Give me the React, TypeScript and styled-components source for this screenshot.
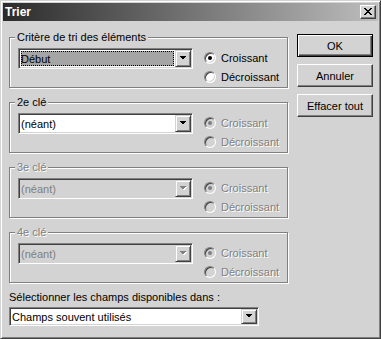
import styled, { createGlobalStyle } from "styled-components";

const face = "#d3d3d3";

const GlobalStyle = createGlobalStyle`
  html, body {
    margin: 0;
    padding: 0;
    background: ${face};
  }
  body {
    font-family: "Liberation Sans", Arial, sans-serif;
    font-size: 11px;
  }
`;

const Window = styled.div`
  width: 381px;
  height: 339px;
  box-sizing: border-box;
  background: ${face};
  border: 1px solid;
  border-color: ${face} #404040 #404040 ${face};
  box-shadow: inset 1px 1px #fff, inset -1px -1px #808080;
  padding: 2px;
  display: flex;
  flex-direction: column;
`;

const TitleBar = styled.div`
  height: 18px;
  flex: none;
  display: flex;
  align-items: center;
  justify-content: space-between;
  padding: 0 2px;
  background: linear-gradient(to right, #2b2b2b, #bdbdbd);
`;

const Title = styled.span`
  color: #fff;
  font-weight: bold;
  font-size: 12px;
  line-height: 18px;
`;

const CloseButton = styled.div`
  width: 16px;
  height: 14px;
  box-sizing: border-box;
  background: ${face};
  border: 1px solid;
  border-color: #fff #404040 #404040 #fff;
  box-shadow: inset -1px -1px #808080;
  display: flex;
  align-items: center;
  justify-content: center;
  padding: 0 1px 1px 0;
`;

const Body = styled.div`
  flex: 1;
  display: flex;
  flex-direction: column;
  padding: 13px 5px 0 6px;
`;

const TopRow = styled.div`
  display: flex;
  justify-content: space-between;
  align-items: flex-start;
`;

const KeysColumn = styled.div`
  display: flex;
  flex-direction: column;
  gap: 14px;
  padding-top: 3px;
`;

const GroupBox = styled.div`
  position: relative;
  width: 279px;
  height: 51px;
  box-sizing: border-box;
  border: 1px solid #808080;
  box-shadow: inset 1px 1px #fff, 1px 1px #fff;
  padding: 10px 0 0 8px;
  display: flex;
  align-items: flex-start;
  gap: 11px;
`;

const Legend = styled.span<{ $disabled?: boolean }>`
  position: absolute;
  top: -7px;
  left: 5px;
  padding: 0 2px;
  background: ${face};
  line-height: 13px;
  color: ${(p) => (p.$disabled ? "#808080" : "#000")};
  text-shadow: ${(p) => (p.$disabled ? "1px 1px 0 #fff" : "none")};
`;

const Combo = styled.div<{ $width: number; $height: number; $disabled?: boolean }>`
  width: ${(p) => p.$width}px;
  height: ${(p) => p.$height}px;
  box-sizing: border-box;
  border: 1px solid;
  border-color: #808080 #fff #fff #808080;
  box-shadow: inset 1px 1px #404040, inset -1px -1px ${face};
  padding: 1px;
  background: ${(p) => (p.$disabled ? face : "#fff")};
  display: flex;
  flex: none;
`;

const ComboText = styled.div<{ $disabled?: boolean; $focused?: boolean }>`
  flex: 1;
  display: flex;
  align-items: center;
  margin: ${(p) => (p.$focused ? "1px" : "0")};
  padding-left: ${(p) => (p.$focused ? "0" : "1px")};
  background: ${(p) => (p.$focused ? "#a5a5a5" : "transparent")};
  outline: ${(p) => (p.$focused ? "1px dotted #000" : "none")};
  outline-offset: -1px;
  color: ${(p) => (p.$disabled ? "#808080" : "#000")};
  white-space: nowrap;
  overflow: hidden;
`;

const DropButton = styled.div`
  width: 16px;
  flex: none;
  box-sizing: border-box;
  background: ${face};
  border: 1px solid;
  border-color: ${face} #404040 #404040 ${face};
  box-shadow: inset 1px 1px #fff, inset -1px -1px #808080;
  display: flex;
  align-items: center;
  justify-content: center;
`;

const RadioColumn = styled.div`
  display: flex;
  flex-direction: column;
`;

const RadioRow = styled.div<{ $disabled?: boolean }>`
  height: 19px;
  display: flex;
  align-items: center;
  gap: 5px;
  color: ${(p) => (p.$disabled ? "#808080" : "#000")};
  text-shadow: ${(p) => (p.$disabled ? "1px 1px 0 #fff" : "none")};
`;

const RadioCircle = styled.span<{ $disabled?: boolean }>`
  width: 12px;
  height: 12px;
  box-sizing: border-box;
  border-radius: 50%;
  border: 1px solid;
  border-color: #808080 #fff #fff #808080;
  box-shadow: inset 1px 1px #404040, inset -1px -1px ${face};
  background: ${(p) => (p.$disabled ? face : "#fff")};
  display: flex;
  align-items: center;
  justify-content: center;
  flex: none;
`;

const RadioDot = styled.span<{ $disabled?: boolean }>`
  width: 4px;
  height: 4px;
  border-radius: 50%;
  background: ${(p) => (p.$disabled ? "#808080" : "#000")};
`;

const ButtonsColumn = styled.div`
  display: flex;
  flex-direction: column;
  gap: 7px;
`;

const Button = styled.div<{ $default?: boolean }>`
  width: 76px;
  height: 23px;
  box-sizing: border-box;
  background: ${face};
  display: flex;
  align-items: center;
  justify-content: center;
  border: 1px solid;
  border-color: ${(p) => (p.$default ? "#000" : "#fff #404040 #404040 #fff")};
  box-shadow: ${(p) =>
    p.$default
      ? "inset 1px 1px #fff, inset -1px -1px #404040, inset -2px -2px #808080"
      : "inset -1px -1px #808080"};
`;

const FieldLabel = styled.div`
  margin-top: 8px;
  line-height: 13px;
`;

const BottomCombo = styled(Combo)`
  margin-top: 3px;
`;

const closeGlyph = [
  "XX....XX",
  ".XX..XX.",
  "..XXXX..",
  "...XX...",
  "..XXXX..",
  ".XX..XX.",
  "XX....XX",
];

const CloseIcon = () => (
  <svg width="8" height="7" viewBox="0 0 8 7" shapeRendering="crispEdges">
    {closeGlyph.map((row, y) =>
      row.split("").map((c, x) =>
        c === "X" ? <rect key={`${x}-${y}`} x={x} y={y} width="1" height="1" fill="#000" /> : null
      )
    )}
  </svg>
);

const Arrow = ({ disabled }: { disabled?: boolean }) => (
  <svg width="8" height="5" viewBox="0 0 8 5" shapeRendering="crispEdges">
    {disabled && <polygon points="1,1 8,1 4.5,4.5" fill="#fff" />}
    <polygon points="0,0 7,0 3.5,3.5" fill={disabled ? "#808080" : "#000"} />
  </svg>
);

interface ComboBoxProps {
  value: string;
  width: number;
  height: number;
  disabled?: boolean;
  focused?: boolean;
  className?: string;
}

const ComboBox = ({ value, width, height, disabled, focused }: ComboBoxProps) => (
  <Combo $width={width} $height={height} $disabled={disabled}>
    <ComboText $disabled={disabled} $focused={focused}>
      {value}
    </ComboText>
    <DropButton>
      <Arrow disabled={disabled} />
    </DropButton>
  </Combo>
);

const Radio = ({ label, checked, disabled }: { label: string; checked?: boolean; disabled?: boolean }) => (
  <RadioRow $disabled={disabled}>
    <RadioCircle $disabled={disabled}>{checked && <RadioDot $disabled={disabled} />}</RadioCircle>
    {label}
  </RadioRow>
);

// the four sort keys, only the first is active
const sortKeys = [
  { label: "Critère de tri des éléments", value: "Début", focused: true, comboDisabled: false, radiosDisabled: false },
  { label: "2e clé", value: "(néant)", focused: false, comboDisabled: false, radiosDisabled: true },
  { label: "3e clé", value: "(néant)", focused: false, comboDisabled: true, radiosDisabled: true },
  { label: "4e clé", value: "(néant)", focused: false, comboDisabled: true, radiosDisabled: true },
];

export default function App() {
  return (
    <>
      <GlobalStyle />
      <Window>
        <TitleBar>
          <Title>Trier</Title>
          <CloseButton>
            <CloseIcon />
          </CloseButton>
        </TitleBar>
        <Body>
          <TopRow>
            <KeysColumn>
              {sortKeys.map((k) => (
                <GroupBox key={k.label}>
                  <Legend $disabled={k.comboDisabled}>{k.label}</Legend>
                  <ComboBox
                    value={k.value}
                    width={175}
                    height={21}
                    disabled={k.comboDisabled}
                    focused={k.focused}
                  />
                  <RadioColumn>
                    <Radio label="Croissant" checked disabled={k.radiosDisabled} />
                    <Radio label="Décroissant" disabled={k.radiosDisabled} />
                  </RadioColumn>
                </GroupBox>
              ))}
            </KeysColumn>
            <ButtonsColumn>
              <Button $default>OK</Button>
              <Button>Annuler</Button>
              <Button>Effacer tout</Button>
            </ButtonsColumn>
          </TopRow>
          <FieldLabel>Sélectionner les champs disponibles dans :</FieldLabel>
          <BottomCombo $width={250} $height={19}>
            <ComboText>Champs souvent utilisés</ComboText>
            <DropButton>
              <Arrow />
            </DropButton>
          </BottomCombo>
        </Body>
      </Window>
    </>
  );
}
